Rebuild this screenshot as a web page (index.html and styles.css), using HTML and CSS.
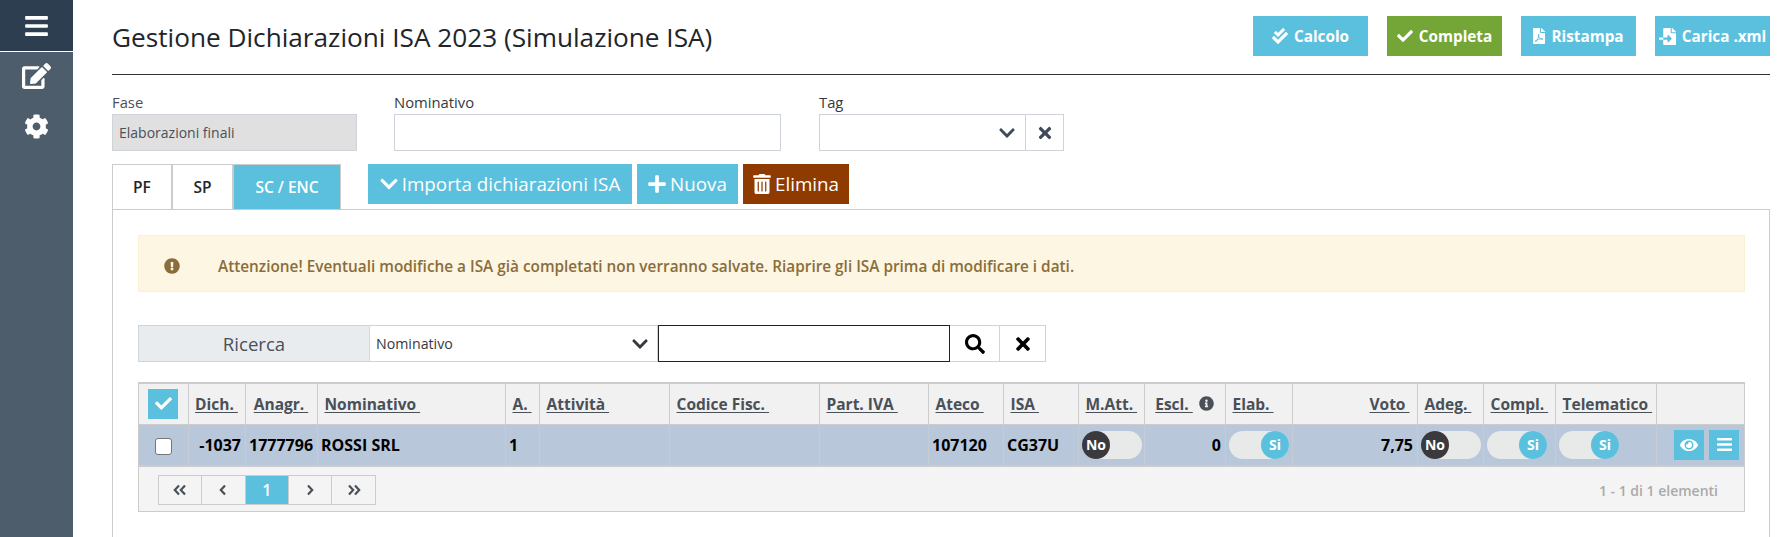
FILE: index.html
```html
<!DOCTYPE html>
<html lang="it">
<head>
<meta charset="utf-8">
<title>Gestione Dichiarazioni ISA 2023</title>
<link rel="stylesheet" href="styles.css">
</head>
<body>
<aside class="sidebar">
  <div class="side-top"><svg class="ic-bars" viewBox="0 0 448 512"><path d="M16 132h416c8.837 0 16-7.163 16-16V76c0-8.837-7.163-16-16-16H16C7.163 60 0 67.163 0 76v40c0 8.837 7.163 16 16 16zm0 160h416c8.837 0 16-7.163 16-16v-40c0-8.837-7.163-16-16-16H16c-8.837 0-16 7.163-16 16v40c0 8.837 7.163 16 16 16zm0 160h416c8.837 0 16-7.163 16-16v-40c0-8.837-7.163-16-16-16H16c-8.837 0-16 7.163-16 16v40c0 8.837 7.163 16 16 16z"/></svg></div>
  <svg class="ic-edit" viewBox="0 0 576 512"><path d="M402.6 83.2l90.2 90.2c3.8 3.8 3.8 10 0 13.8L274.4 405.6l-92.8 10.3c-12.4 1.4-22.9-9.1-21.5-21.5l10.3-92.8L388.8 83.2c3.8-3.8 10-3.8 13.8 0zm162-22.9l-48.8-48.8c-15.2-15.2-39.9-15.2-55.2 0l-35.4 35.4c-3.8 3.8-3.8 10 0 13.8l90.2 90.2c3.8 3.8 10 3.8 13.8 0l35.4-35.4c15.2-15.3 15.2-40 0-55.2zM384 346.2V448H64V128h229.8c3.2 0 6.2-1.3 8.5-3.5l40-40c7.6-7.6 2.2-20.5-8.5-20.5H48C21.5 64 0 85.5 0 112v352c0 26.5 21.5 48 48 48h352c26.5 0 48-21.5 48-48V306.2c0-10.7-12.9-16-20.5-8.5l-40 40c-2.2 2.3-3.5 5.3-3.5 8.5z"/></svg>
  <svg class="ic-cog" viewBox="0 0 512 512"><path d="M487.4 315.7l-42.6-24.6c4.3-23.2 4.3-47 0-70.2l42.6-24.6c4.9-2.8 7.1-8.6 5.5-14-11.1-35.6-30-67.8-54.7-94.6-3.8-4.1-10-5.1-14.8-2.3L380.8 110c-17.9-15.4-38.5-27.3-60.8-35.1V25.8c0-5.6-3.9-10.5-9.4-11.7-36.7-8.2-74.3-7.8-109.2 0-5.5 1.2-9.4 6.1-9.4 11.7V75c-22.2 7.9-42.8 19.8-60.8 35.1L88.7 85.5c-4.9-2.8-11-1.9-14.8 2.3-24.7 26.7-43.6 58.9-54.7 94.6-1.7 5.4.6 11.2 5.5 14L67.3 221c-4.3 23.2-4.3 47 0 70.2l-42.6 24.6c-4.9 2.8-7.1 8.6-5.5 14 11.1 35.6 30 67.8 54.7 94.6 3.8 4.1 10 5.1 14.8 2.3l42.6-24.6c17.9 15.4 38.5 27.3 60.8 35.1v49.2c0 5.6 3.9 10.5 9.4 11.7 36.7 8.2 74.3 7.8 109.2 0 5.5-1.2 9.4-6.1 9.4-11.7v-49.2c22.2-7.9 42.8-19.8 60.8-35.1l42.6 24.6c4.9 2.8 11 1.9 14.8-2.3 24.7-26.7 43.6-58.9 54.7-94.6 1.5-5.5-.7-11.3-5.6-14.1zM256 336c-44.1 0-80-35.9-80-80s35.9-80 80-80 80 35.9 80 80-35.9 80-80 80z"/></svg>
</aside>
<main class="main">
  <header class="page-head">
    <h1 class="title">Gestione Dichiarazioni ISA 2023 (Simulazione ISA)</h1>
    <div class="head-actions">
      <button class="hbtn info"><svg class="ic16" viewBox="0 0 512 512"><path d="M505 174.8l-39.6-39.6c-9.4-9.4-24.6-9.4-33.9 0L192 374.7 80.6 263.2c-9.4-9.4-24.6-9.4-33.9 0L7 302.9c-9.4 9.4-9.4 24.6 0 34L175 505c9.4 9.4 24.6 9.4 33.9 0l296-296.2c9.4-9.5 9.4-24.7.1-34zm-324.3 106c6.2 6.3 16.4 6.3 22.6 0l208-208.2c6.2-6.3 6.2-16.4 0-22.6L366.1 4.7c-6.2-6.3-16.4-6.3-22.6 0L192 156.2l-55.4-55.5c-6.2-6.3-16.4-6.3-22.6 0L68.7 146c-6.2 6.3-6.2 16.4 0 22.6l112 112.2z"/></svg>Calcolo</button>
      <button class="hbtn green"><svg class="ic16" viewBox="0 0 512 512"><path d="M173.898 439.404l-166.4-166.4c-9.997-9.997-9.997-26.206 0-36.204l36.203-36.204c9.997-9.998 26.207-9.998 36.204 0L192 312.69 432.095 72.596c9.997-9.997 26.207-9.997 36.204 0l36.203 36.204c9.997 9.997 9.997 26.206 0 36.204l-294.4 294.401c-9.998 9.997-26.207 9.997-36.204-.001z"/></svg>Completa</button>
      <button class="hbtn info"><svg class="ic-file" viewBox="0 0 384 512"><path d="M181.9 256.1c-5-16-4.9-46.9-2-46.9 8.4 0 7.6 36.9 2 46.9zm-1.7 47.2c-7.7 20.2-17.3 43.3-28.4 62.7 18.3-7 39-17.2 62.9-21.9-12.7-9.6-24.9-23.4-34.5-40.8zM86.1 428.1c0 .8 13.2-5.4 34.9-40.2-6.7 6.3-29.1 24.5-34.9 40.2zM248 160h136v328c0 13.3-10.7 24-24 24H24c-13.3 0-24-10.7-24-24V24C0 10.7 10.7 0 24 0h200v136c0 13.2 10.8 24 24 24zm-8 171.8c-20-12.2-33.3-29-42.7-53.8 4.5-18.5 11.6-46.6 6.2-64.2-4.7-29.4-42.4-26.5-47.8-6.8-5 18.3-.4 44.1 8.1 77-11.6 27.6-28.7 64.6-40.8 85.8-.1 0-.1.1-.2.1-27.1 13.9-73.6 44.5-54.5 68 5.6 6.9 16 10 21.5 10 17.9 0 35.7-18 61.1-61.8 25.8-8.5 54.1-19.1 79-23.2 21.7 11.8 47.1 19.5 64 19.5 29.2 0 31.2-32 19.7-43.4-13.9-13.6-54.3-9.7-73.6-7.2zM377 105L279 7c-4.5-4.5-10.6-7-17-7h-6v128h128v-6.1c0-6.3-2.5-12.4-7-16.9zm-74.1 255.3c4.1-2.7-2.5-11.9-42.8-9 37.1 15.8 42.8 9 42.8 9z"/></svg>Ristampa</button>
      <button class="hbtn info"><svg class="ic-import" viewBox="0 0 512 512"><path d="M16 288c-8.8 0-16 7.2-16 16v32c0 8.8 7.2 16 16 16h112v-64zm489-183L407.1 7c-4.5-4.5-10.6-7-17-7H384v128h128v-6.1c0-6.3-2.5-12.4-7-16.9zm-153 31V0H152c-13.3 0-24 10.7-24 24v264h128v-65.2c0-14.3 17.3-21.4 27.4-11.3L379 308c6.6 6.7 6.6 17.4 0 24l-95.7 96.4c-10.1 10.1-27.4 3-27.4-11.3V352H128v136c0 13.3 10.7 24 24 24h336c13.3 0 24-10.7 24-24V160H376c-13.2 0-24-10.8-24-24z"/></svg>Carica .xml</button>
    </div>
  </header>

  <section class="filters">
    <div class="field f-fase"><label class="lbl lbl-muted">Fase</label><div class="input disabled">Elaborazioni finali</div></div>
    <div class="field f-nom"><label class="lbl">Nominativo</label><div class="input"></div></div>
    <div class="field f-tag"><label class="lbl">Tag</label>
      <div class="tag-group">
        <div class="input tag-select"><svg class="ic-chev" viewBox="0 0 448 512"><path d="M207.029 381.476L12.686 187.132c-9.373-9.373-9.373-24.569 0-33.941l22.667-22.667c9.357-9.357 24.522-9.375 33.901-.04L224 284.505l154.745-154.021c9.379-9.335 24.544-9.317 33.901.04l22.667 22.667c9.373 9.373 9.373 24.569 0 33.941L240.971 381.476c-9.373 9.372-24.569 9.372-33.942 0z"/></svg></div>
        <div class="tag-clear"><svg class="ic-x" viewBox="0 0 352 512"><path d="M242.72 256l100.07-100.07c12.28-12.28 12.28-32.19 0-44.48l-22.24-22.24c-12.28-12.28-32.19-12.28-44.48 0L176 189.28 75.93 89.21c-12.28-12.28-32.19-12.28-44.48 0L9.21 111.45c-12.28 12.28-12.28 32.19 0 44.48L109.28 256 9.21 356.07c-12.28 12.28-12.28 32.19 0 44.48l22.24 22.24c12.28 12.28 32.2 12.28 44.48 0L176 322.72l100.07 100.07c12.28 12.28 32.2 12.28 44.48 0l22.24-22.24c12.28-12.28 12.28-32.19 0-44.48L242.72 256z"/></svg></div>
      </div>
    </div>
  </section>

  <div class="tabs-row">
    <div class="tabs">
      <div class="tab t-pf">PF</div>
      <div class="tab t-sp">SP</div>
      <div class="tab t-sc active">SC / ENC</div>
    </div>
    <div class="tab-actions">
      <button class="abtn info b-imp"><svg class="ic-a" viewBox="0 0 448 512"><path d="M207.029 381.476L12.686 187.132c-9.373-9.373-9.373-24.569 0-33.941l22.667-22.667c9.357-9.357 24.522-9.375 33.901-.04L224 284.505l154.745-154.021c9.379-9.335 24.544-9.317 33.901.04l22.667 22.667c9.373 9.373 9.373 24.569 0 33.941L240.971 381.476c-9.373 9.372-24.569 9.372-33.942 0z"/></svg>Importa dichiarazioni ISA</button>
      <button class="abtn info b-new"><svg class="ic-a" viewBox="0 0 448 512"><path d="M416 208H272V64c0-17.67-14.33-32-32-32h-32c-17.67 0-32 14.33-32 32v144H32c-17.67 0-32 14.33-32 32v32c0 17.67 14.33 32 32 32h144v144c0 17.67 14.33 32 32 32h32c17.67 0 32-14.33 32-32V304h144c17.67 0 32-14.33 32-32v-32c0-17.67-14.33-32-32-32z"/></svg>Nuova</button>
      <button class="abtn danger b-del"><svg class="ic-a" viewBox="0 0 448 512"><path d="M32 464a48 48 0 0 0 48 48h288a48 48 0 0 0 48-48V128H32zm272-256a16 16 0 0 1 32 0v224a16 16 0 0 1-32 0zm-96 0a16 16 0 0 1 32 0v224a16 16 0 0 1-32 0zm-96 0a16 16 0 0 1 32 0v224a16 16 0 0 1-32 0zM432 32H312l-9.4-18.7A24 24 0 0 0 281.1 0H166.8a23.72 23.72 0 0 0-21.4 13.3L136 32H16A16 16 0 0 0 0 48v32a16 16 0 0 0 16 16h416a16 16 0 0 0 16-16V48a16 16 0 0 0-16-16z"/></svg>Elimina</button>
    </div>
  </div>

  <section class="panel">
    <div class="alert">
      <svg class="ic-alert" viewBox="0 0 512 512"><path d="M504 256c0 136.997-111.043 248-248 248S8 392.997 8 256C8 119.083 119.043 8 256 8s248 111.083 248 248zm-248 50c-25.405 0-46 20.595-46 46s20.595 46 46 46 46-20.595 46-46-20.595-46-46-46zm-43.673-165.346l7.418 136c.347 6.364 5.609 11.346 11.982 11.346h48.546c6.373 0 11.635-4.982 11.982-11.346l7.418-136c.375-6.874-5.098-12.654-11.982-12.654h-63.383c-6.884 0-12.356 5.78-11.981 12.654z"/></svg>
      <span>Attenzione! Eventuali modifiche a ISA già completati non verranno salvate. Riaprire gli ISA prima di modificare i dati.</span>
    </div>

    <div class="search">
      <div class="search-label">Ricerca</div>
      <div class="search-select">Nominativo<svg class="ic-chev dark" viewBox="0 0 448 512"><path d="M207.029 381.476L12.686 187.132c-9.373-9.373-9.373-24.569 0-33.941l22.667-22.667c9.357-9.357 24.522-9.375 33.901-.04L224 284.505l154.745-154.021c9.379-9.335 24.544-9.317 33.901.04l22.667 22.667c9.373 9.373 9.373 24.569 0 33.941L240.971 381.476c-9.373 9.372-24.569 9.372-33.942 0z"/></svg></div>
      <div class="search-input"></div>
      <div class="search-btn sb-go"><svg class="ic-s" viewBox="0 0 512 512"><path d="M505 442.7L405.3 343c-4.5-4.5-10.6-7-17-7H372c27.6-35.3 44-79.7 44-128C416 93.1 322.9 0 208 0S0 93.1 0 208s93.1 208 208 208c48.3 0 92.7-16.4 128-44v16.3c0 6.4 2.5 12.5 7 17l99.7 99.7c9.4 9.4 24.6 9.4 33.9 0l28.3-28.3c9.4-9.4 9.4-24.6.1-34zM208 336c-70.7 0-128-57.2-128-128 0-70.7 57.2-128 128-128 70.7 0 128 57.2 128 128 0 70.7-57.2 128-128 128z"/></svg></div>
      <div class="search-btn sb-x"><svg class="ic-s" viewBox="0 0 352 512"><path d="M242.72 256l100.07-100.07c12.28-12.28 12.28-32.19 0-44.48l-22.24-22.24c-12.28-12.28-32.19-12.28-44.48 0L176 189.28 75.93 89.21c-12.28-12.28-32.19-12.28-44.48 0L9.21 111.45c-12.28 12.28-12.28 32.19 0 44.48L109.28 256 9.21 356.07c-12.28 12.28-12.28 32.19 0 44.48l22.24 22.24c12.28 12.28 32.2 12.28 44.48 0L176 322.72l100.07 100.07c12.28 12.28 32.2 12.28 44.48 0l22.24-22.24c12.28-12.28 12.28-32.19 0-44.48L242.72 256z"/></svg></div>
    </div>

    <div class="grid">
      <table class="tbl">
        <colgroup>
          <col class="c1"><col class="c2"><col class="c3"><col class="c4"><col class="c5"><col class="c6"><col class="c7"><col class="c8"><col class="c9"><col class="c10"><col class="c11"><col class="c12"><col class="c13"><col class="c14"><col class="c15"><col class="c16"><col class="c17"><col class="c18">
        </colgroup>
        <thead>
          <tr>
            <th class="ctr"><span class="check-all"><svg class="ic-check" viewBox="0 0 512 512"><path d="M173.898 439.404l-166.4-166.4c-9.997-9.997-9.997-26.206 0-36.204l36.203-36.204c9.997-9.998 26.207-9.998 36.204 0L192 312.69 432.095 72.596c9.997-9.997 26.207-9.997 36.204 0l36.203 36.204c9.997 9.997 9.997 26.206 0 36.204l-294.4 294.401c-9.998 9.997-26.207 9.997-36.204-.001z"/></svg></span></th>
            <th class="ctr"><u>Dich.&nbsp;</u></th>
            <th class="ctr"><u>Anagr.&nbsp;</u></th>
            <th><u>Nominativo&nbsp;</u></th>
            <th><u>A.&nbsp;</u></th>
            <th><u>Attività&nbsp;</u></th>
            <th><u>Codice Fisc.&nbsp;</u></th>
            <th><u>Part. IVA&nbsp;</u></th>
            <th><u>Ateco&nbsp;</u></th>
            <th><u>ISA&nbsp;</u></th>
            <th><u>M.Att.&nbsp;</u></th>
            <th class="ctr"><u>Escl.&nbsp;</u><svg class="ic-info" viewBox="0 0 512 512"><path d="M256 8C119.043 8 8 119.083 8 256c0 136.997 111.043 248 248 248s248-111.003 248-248C504 119.083 392.957 8 256 8zm0 110c23.196 0 42 18.804 42 42s-18.804 42-42 42-42-18.804-42-42 18.804-42 42-42zm56 254c0 6.627-5.373 12-12 12h-88c-6.627 0-12-5.373-12-12v-24c0-6.627 5.373-12 12-12h12v-64h-12c-6.627 0-12-5.373-12-12v-24c0-6.627 5.373-12 12-12h64c6.627 0 12 5.373 12 12v100h12c6.627 0 12 5.373 12 12v24z"/></svg></th>
            <th><u>Elab.&nbsp;</u></th>
            <th class="rgt"><u>Voto&nbsp;</u></th>
            <th><u>Adeg.&nbsp;</u></th>
            <th><u>Compl.&nbsp;</u></th>
            <th><u>Telematico&nbsp;</u></th>
            <th></th>
          </tr>
        </thead>
        <tbody>
          <tr>
            <td class="ctr"><span class="cb"></span></td>
            <td class="rgt">-1037</td>
            <td class="rgt">1777796</td>
            <td>ROSSI SRL</td>
            <td>1</td>
            <td></td>
            <td></td>
            <td></td>
            <td>107120</td>
            <td>CG37U</td>
            <td><span class="toggle off"><span class="knob">No</span></span></td>
            <td class="rgt">0</td>
            <td><span class="toggle on"><span class="knob">Si</span></span></td>
            <td class="rgt">7,75</td>
            <td><span class="toggle off"><span class="knob">No</span></span></td>
            <td><span class="toggle on"><span class="knob">Si</span></span></td>
            <td><span class="toggle on"><span class="knob">Si</span></span></td>
            <td class="row-actions">
              <span class="row-btn"><svg class="ic-eye" viewBox="0 0 576 512"><path d="M572.52 241.4C518.29 135.59 410.93 64 288 64S57.68 135.64 3.48 241.41a32.35 32.35 0 0 0 0 29.19C57.71 376.41 165.07 448 288 448s230.32-71.64 284.52-177.41a32.35 32.35 0 0 0 0-29.19zM288 400a144 144 0 1 1 144-144 143.93 143.93 0 0 1-144 144zm0-240a95.31 95.31 0 0 0-25.31 3.79 47.85 47.85 0 0 1-66.9 66.9A95.78 95.78 0 1 0 288 160z"/></svg></span>
              <span class="row-btn"><svg class="ic-menu" viewBox="0 0 448 512"><path d="M16 132h416c8.837 0 16-7.163 16-16V76c0-8.837-7.163-16-16-16H16C7.163 60 0 67.163 0 76v40c0 8.837 7.163 16 16 16zm0 160h416c8.837 0 16-7.163 16-16v-40c0-8.837-7.163-16-16-16H16c-8.837 0-16 7.163-16 16v40c0 8.837 7.163 16 16 16zm0 160h416c8.837 0 16-7.163 16-16v-40c0-8.837-7.163-16-16-16H16c-8.837 0-16 7.163-16 16v40c0 8.837 7.163 16 16 16z"/></svg></span>
            </td>
          </tr>
        </tbody>
      </table>
      <div class="pager-bar">
        <div class="pager">
          <span class="pg"><svg class="ic-pg" viewBox="0 0 14 12"><path d="M6 1.5 1.8 6 6 10.5M12 1.5 7.800 6 12 10.500"/></svg></span>
          <span class="pg"><svg class="ic-pg" viewBox="0 0 14 12"><path d="M9 1.500 4.800 6 9 10.500"/></svg></span>
          <span class="pg current">1</span>
          <span class="pg"><svg class="ic-pg" viewBox="0 0 14 12"><path d="M5 1.500 9.200 6 5 10.500"/></svg></span>
          <span class="pg"><svg class="ic-pg" viewBox="0 0 14 12"><path d="M2 1.500 6.200 6 2 10.500M8 1.500 12.200 6 8 10.500"/></svg></span>
        </div>
        <div class="pager-info">1 - 1 di 1 elementi</div>
      </div>
    </div>
  </section>
</main>
</body>
</html>
```
FILE: styles.css
```css
* { box-sizing: border-box; }
html, body { height: 100%; }
body {
  margin: 0;
  display: flex;
  overflow: hidden;
  background: #fff;
  color: #212529;
  font-family: "Open Sans", "Noto Sans", sans-serif;
  font-size: 14px;
}
svg { fill: currentColor; display: block; flex: none; }
button { font-family: inherit; border: 0; padding: 0; color: #fff; }

.sidebar {
  width: 73px;
  flex: none;
  background: #4e5d6c;
  color: #fff;
  display: flex;
  flex-direction: column;
  align-items: center;
}
.side-top {
  width: 100%;
  height: 52px;
  background: #2c3e50;
  border-bottom: 1px solid #fff;
  display: flex;
  align-items: center;
  justify-content: center;
}
.ic-bars { width: 23px; height: 26px; }
.ic-edit { width: 29px; height: 26px; margin: 11px 0 0 0; }
.ic-cog { width: 25px; height: 25px; margin-top: 25px; }

.main { flex: 1; min-width: 0; padding: 0 7px 0 39px; }

.page-head {
  height: 75px;
  border-bottom: 1px solid #333;
  display: flex;
  justify-content: space-between;
  align-items: flex-start;
}
.title {
  margin: 18px 0 0;
  font-size: 26.200px;
  line-height: 38px;
  font-weight: 400;
  color: #212529;
  white-space: nowrap;
}
.head-actions { display: flex; gap: 19px; padding-top: 16px; }
.hbtn {
  width: 115px;
  height: 40px;
  display: flex;
  align-items: center;
  justify-content: center;
  gap: 6px;
  font-size: 15.300px;
  font-weight: 700;
  white-space: nowrap;
}
.info { background: #5bc0de; }
.green { background: #74a637; }
.danger { background: #8f3b00; }
.ic16 { width: 16px; height: 16px; }
.ic-file { width: 12px; height: 16px; }
.ic-import { width: 17px; height: 17px; }

.filters { display: flex; margin-top: 15px; }
.field { display: flex; flex-direction: column; }
.f-fase { width: 245px; margin-right: 37px; }
.f-nom { width: 387px; margin-right: 38px; }
.f-tag { width: 245px; }
.lbl { font-size: 14.800px; line-height: 24px; color: #343a40; }
.lbl-muted { color: #495057; }
.input {
  height: 37px;
  border: 1px solid #ced4da;
  background: #fff;
  display: flex;
  align-items: center;
  padding-left: 6px;
  font-size: 14px;
  color: #495057;
}
.disabled { background: #e0e0e0; }
.tag-group { display: flex; }
.tag-select { flex: 1; justify-content: flex-end; padding-right: 10px; border-right: 0; }
.tag-clear {
  width: 39px;
  height: 37px;
  border: 1px solid #ced4da;
  display: flex;
  align-items: center;
  justify-content: center;
  color: #3f4a59;
}
.ic-chev { width: 16px; height: 18px; color: #3f4a59; }
.ic-x { width: 14px; height: 18px; }

.tabs-row { display: flex; margin-top: 13px; height: 45px; }
.tabs { display: flex; height: 45px; }
.tab {
  height: 45px;
  display: flex;
  align-items: center;
  justify-content: center;
  border-top: 1px solid #ccc;
  border-right: 2px solid #ccc;
  background: #fff;
  font-weight: 600;
  font-size: 15.500px;
  color: #212529;
}
.t-pf { width: 61px; border-left: 1px solid #ccc; }
.t-sp { width: 61px; }
.t-sc { width: 107px; }
.tab.active { background: #5bc0de; color: #fff; border-right: 1px solid #ccc; }
.tab-actions { display: flex; gap: 5px; margin-left: 27px; height: 40px; }
.abtn {
  height: 40px;
  display: flex;
  align-items: center;
  justify-content: center;
  gap: 4px;
  font-size: 18.800px;
  white-space: nowrap;
}
.ic-a { width: 18px; height: 20px; }
.b-imp { width: 264px; }
.b-new { width: 101px; }
.b-del { width: 106px; }

.panel {
  height: 328px;
  border: 1px solid #ccc;
  border-bottom: 0;
  padding: 25px 24px 0 25px;
}
.alert {
  height: 57px;
  background: #fcf6e2;
  border: 1px solid #faf0d5;
  padding-top: 4px;
  display: flex;
  align-items: center;
  color: #8a6d3b;
  font-weight: 600;
  font-size: 15.350px;
}
.ic-alert { width: 16px; height: 16px; margin: 0 38px 0 25px; }

.search { display: flex; height: 37px; margin-top: 33px; }
.search-label {
  width: 231px;
  background: #e9ecef;
  border: 1px solid #ced4da;
  border-right: 0;
  display: flex;
  align-items: center;
  justify-content: center;
  font-size: 18.600px;
  color: #495057;
}
.search-select {
  width: 289px;
  border: 1px solid #ced4da;
  border-left: 1px solid #d5dae0;
  display: flex;
  align-items: center;
  justify-content: space-between;
  padding: 0 9px 0 6px;
  font-size: 14.200px;
  color: #343a40;
}
.ic-chev.dark { color: #343a40; }
.search-input { width: 292px; border: 1px solid #222; }
.search-btn {
  height: 37px;
  border: 1px solid #ced4da;
  border-left: 0;
  display: flex;
  align-items: center;
  justify-content: center;
  color: #000;
}
.sb-go { width: 50px; }
.sb-x { width: 46px; }
.ic-s { width: 20px; height: 20px; }

.grid { margin-top: 20px; border: 1px solid #ccc; border-top: 0; background: #f4f4f4; height: 130px; }
.tbl { width: 100%; table-layout: fixed; border-collapse: collapse; }
.c1 { width: 49px; } .c2 { width: 57px; } .c3 { width: 72px; } .c4 { width: 188px; }
.c5 { width: 34px; } .c6 { width: 130px; } .c7 { width: 150px; } .c8 { width: 109px; }
.c9 { width: 75px; } .c10 { width: 75px; } .c11 { width: 66px; } .c12 { width: 81px; }
.c13 { width: 67px; } .c14 { width: 125px; } .c15 { width: 66px; } .c16 { width: 72px; }
.c17 { width: 101px; }
.tbl th {
  height: 41px;
  background: #f1f1f1;
  border-top: 2px solid #ccc;
  border-right: 1px solid #ccc;
  border-bottom: 1px solid #ccc;
  padding: 0 7px;
  text-align: left;
  font-size: 15.500px;
  font-weight: 700;
  color: #495057;
  white-space: nowrap;
  overflow: hidden;
}
.tbl th:last-child, .tbl td:last-child { border-right: 0; }
.tbl td {
  height: 42px;
  background: #b8c7d9;
  border-right: 1px solid #c5ccd6;
  border-bottom: 2px solid #ccc;
  padding: 0 3.500px;
  font-size: 16px;
  font-weight: 700;
  color: #000;
  white-space: nowrap;
  overflow: hidden;
}
.tbl .ctr { text-align: center; padding: 0; }
.tbl .rgt { text-align: right; }
.tbl th.rgt { padding-right: 7px; }
.tbl td.rgt { padding-right: 3.500px; }
.tbl u { text-underline-offset: 2px; }

.check-all {
  display: inline-flex;
  width: 30px;
  height: 30px;
  background: #5bc0de;
  color: #fff;
  align-items: center;
  justify-content: center;
  vertical-align: middle;
}
.ic-check { width: 17px; height: 17px; }
.ic-info { display: inline-block; width: 15px; height: 15px; margin-left: 6px; vertical-align: -1px; color: #495057; }
.cb {
  display: inline-block;
  width: 17px;
  height: 17px;
  background: #fff;
  border: 1px solid #767676;
  border-radius: 3px;
  vertical-align: middle;
}
.toggle {
  display: flex;
  width: 60px;
  height: 28px;
  background: #e8e9e9;
  border-radius: 14px;
}
.toggle.on { justify-content: flex-end; }
.knob {
  width: 28px;
  height: 28px;
  border-radius: 50%;
  display: flex;
  align-items: center;
  justify-content: center;
  color: #fff;
  font-size: 14px;
  font-weight: 700;
}
.off .knob { background: #3a3a3e; }
.on .knob { background: #5bc0de; }
.row-actions .row-btn {
  width: 30px;
  height: 30px;
  background: #5bc0de;
  color: #fff;
  display: inline-flex;
  align-items: center;
  justify-content: center;
  vertical-align: middle;
}
.tbl .row-actions { text-align: right; padding-right: 5px; font-size: 0; }
.row-btn + .row-btn { margin-left: 5px; }
.ic-eye { width: 18px; height: 16px; }
.ic-menu { width: 15px; height: 17px; }

.pager-bar {
  height: 46px;
  display: flex;
  align-items: center;
  justify-content: space-between;
  padding: 0 26px 0 19px;
}
.pager { display: flex; border: 1px solid #ccc; height: 30px; }
.pg {
  width: 43.300px;
  display: flex;
  align-items: center;
  justify-content: center;
  border-right: 1px solid #ccc;
  color: #495057;
}
.pg:last-child { border-right: 0; }
.pg.current { background: #5bc0de; color: #fff; font-weight: 600; font-size: 16px; }
.ic-pg { width: 14px; height: 12px; fill: none; stroke: currentColor; stroke-width: 2.200px; }
.pager-info { color: #aaa; font-size: 14px; font-weight: 600; }
```
